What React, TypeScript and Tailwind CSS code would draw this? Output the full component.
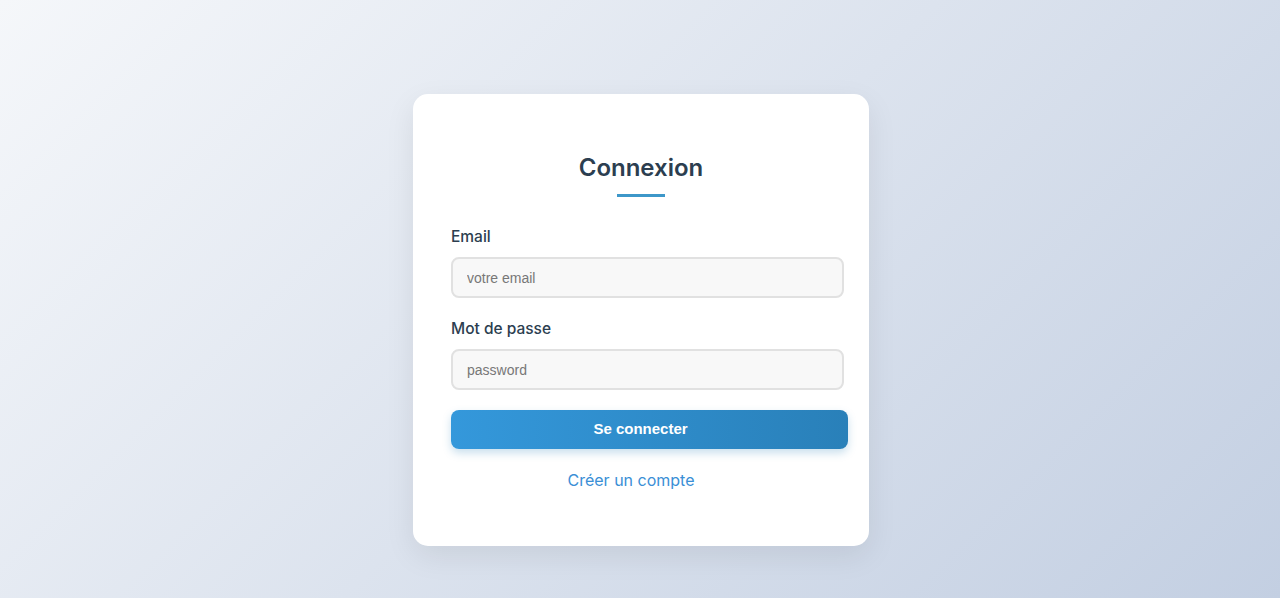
export default function App() {
  return (
    <div className="min-h-[598px] w-full bg-[linear-gradient(135deg,#f5f7fa_0%,#c3cfe2_100%)] flex justify-center pt-[94px] pl-[2px] font-['Inter','Noto_Sans',sans-serif]">
      <div className="w-[456px] h-[452px] rounded-[15px] bg-white shadow-[0_10px_30px_rgba(0,0,0,0.08)] pl-[38px] pr-[21px] pt-[56px]">
        <h2 className="text-center text-[24px] leading-[36px] font-semibold text-[#2c3e50] pr-[17px]">
          Connexion
        </h2>
        <div className="mx-auto mt-[8px] h-[3px] w-[48px] bg-[#3d97c9] relative left-[-9px]" />

        <form className="mt-[28px] flex flex-col">
          <label className="text-[15.5px] leading-[24px] font-medium text-[#2c3e50]">Email</label>
          <input
            type="email"
            placeholder="votre email"
            className="mt-[8px] h-[41px] w-[393px] rounded-[8px] border-2 border-[#e1e1e1] bg-[#f8f8f8] px-[14px] text-[14px] font-['Liberation_Sans',Arial,sans-serif] placeholder:text-[#777] outline-none"
          />

          <label className="mt-[19px] text-[15.5px] leading-[24px] font-medium text-[#2c3e50]">Mot de passe</label>
          <input
            type="password"
            placeholder="password"
            className="mt-[8px] h-[41px] w-[393px] rounded-[8px] border-2 border-[#e1e1e1] bg-[#f8f8f8] px-[14px] text-[14px] font-['Liberation_Sans',Arial,sans-serif] placeholder:text-[#777] outline-none"
          />

          <button
            type="button"
            className="mt-[20px] h-[39px] w-[397px] rounded-[8px] bg-[linear-gradient(90deg,#3498db,#2980b9)] pr-[18px] text-white text-[15px] font-bold font-['Liberation_Sans',Arial,sans-serif] shadow-[0_4px_8px_rgba(41,128,185,0.25)]"
          >
            Se connecter
          </button>

          <a href="#" className="mt-[19px] text-center text-[16px] leading-[24px] text-[#3a8fd6] pr-[37px]">
            Créer un compte
          </a>
        </form>
      </div>
    </div>
  )
}
